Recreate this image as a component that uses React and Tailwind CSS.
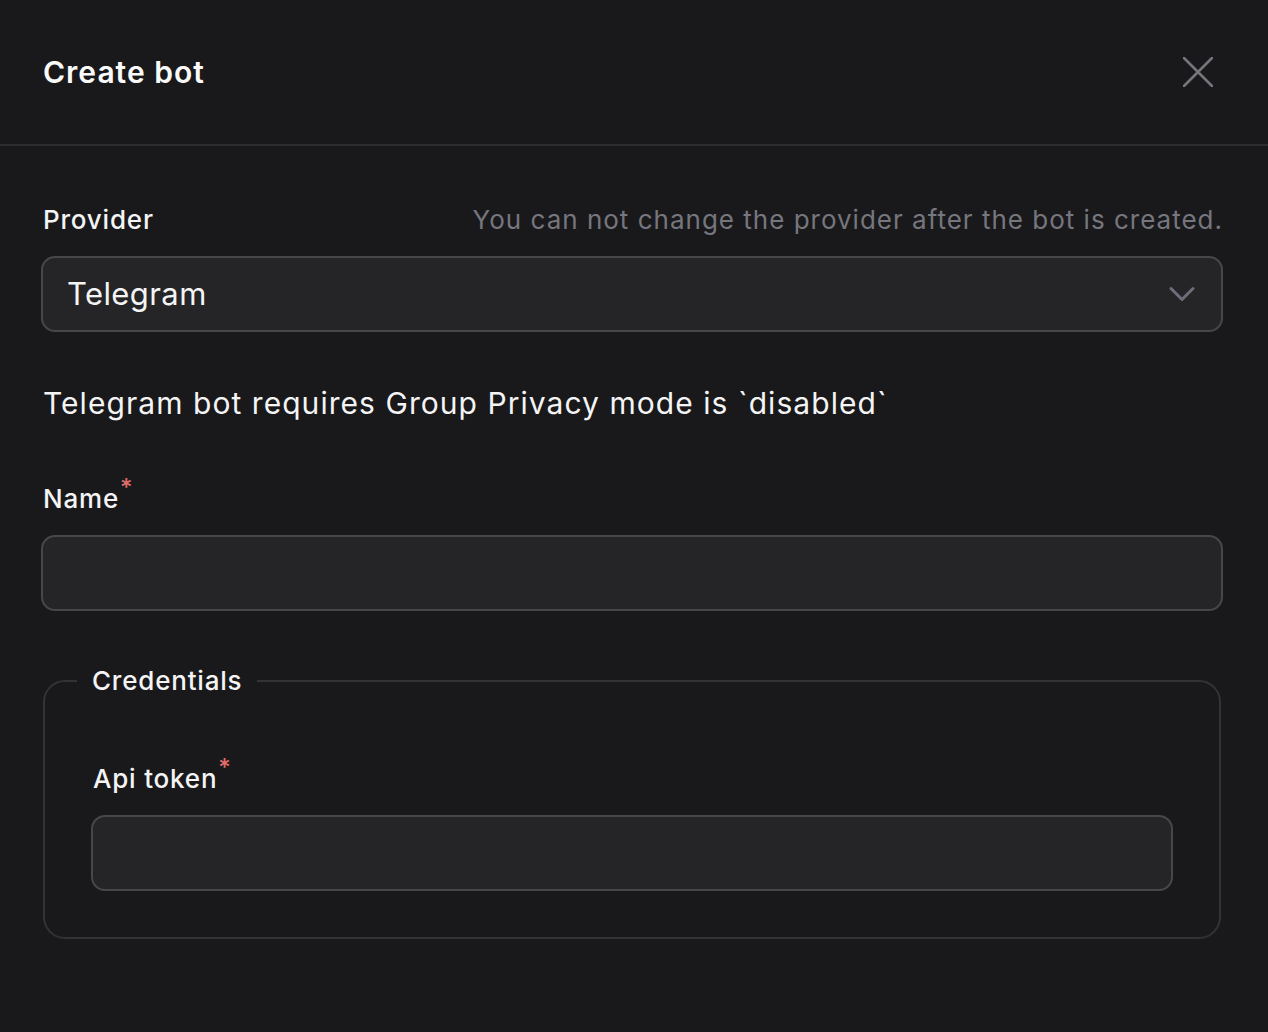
const font = { fontFamily: 'Inter, "Noto Sans", sans-serif' };

function CloseIcon() {
  return (
    <svg width="30" height="30" viewBox="0 0 30 30" fill="none" stroke="#75757b" strokeWidth="2.6" strokeLinecap="round">
      <path d="M1 1 L29 29 M29 1 L1 29" />
    </svg>
  );
}

function Chevron() {
  return (
    <svg width="26" height="16" viewBox="0 0 26 16" fill="none" stroke="#6e6e7a" strokeWidth="3" strokeLinecap="round" strokeLinejoin="round">
      <path d="M2 2.5 L13 13.5 L24 2.5" />
    </svg>
  );
}

function Label({ children, required }) {
  return (
    <div className="h-[36px] text-[26px] leading-[36px] font-medium tracking-[0.8px] text-[#f4f4f5]">
      {children}
      {required && <span className="relative -top-[12px] ml-[1px] text-[24px] text-[#e06d6b]">*</span>}
    </div>
  );
}

function Input() {
  return <div className="h-[76px] w-full rounded-[14px] border-2 border-[#47474b] bg-[#252527]" />;
}

export default function App() {
  return (
    <div className="min-h-[1032px] w-full bg-[#19191b] text-[#f4f4f5]" style={font}>
      <div className="flex h-[146px] items-center justify-between border-b-2 border-[#2d2d30] pl-[43px] pr-[55px]">
        <h1 className="text-[30px] font-semibold tracking-[1px] text-[#fafafa]">Create bot</h1>
        <CloseIcon />
      </div>

      <div className="pl-[41px] pr-[45px] pt-[56px]">
        <div className="flex h-[36px] items-center justify-between pl-[2px]">
          <Label>Provider</Label>
          <span className="text-[26px] leading-[36px] tracking-[1px] text-[#76767e]">You can not change the provider after the bot is created.</span>
        </div>
        <div className="mt-[18px] flex h-[76px] items-center justify-between rounded-[14px] border-2 border-[#47474b] bg-[#252527] pl-[24px] pr-[26px]">
          <span className="text-[31px] tracking-[0.4px] text-[#f4f4f5]">Telegram</span>
          <Chevron />
        </div>

        <p className="mt-[51px] h-[40px] pl-[2px] text-[30px] leading-[40px] tracking-[1.05px] text-[#f4f4f5]">
          Telegram bot requires Group Privacy mode is `disabled`
        </p>

        <div className="mt-[58px] pl-[2px]">
          <Label required>Name</Label>
        </div>
        <div className="mt-[18px]">
          <Input />
        </div>

        <fieldset className="mx-[2px] mt-[52px] rounded-[22px] border-2 border-[#333336] p-0">
          <legend className="ml-[32px] px-[15px] text-[26px] leading-[36px] font-medium tracking-[0.8px] text-[#f4f4f5]">Credentials</legend>
          <div className="px-[46px] pb-[46px] pt-[62px]">
            <div className="pl-[2px]">
              <Label required>Api token</Label>
            </div>
            <div className="mt-[18px]">
              <Input />
            </div>
          </div>
        </fieldset>
      </div>
    </div>
  );
}
